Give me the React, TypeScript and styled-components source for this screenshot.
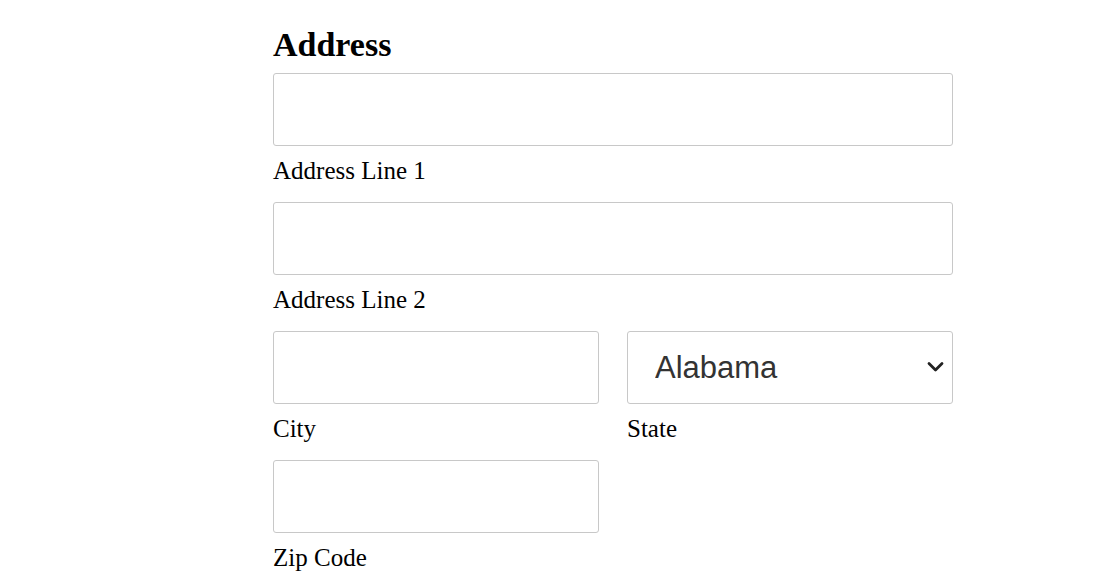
import React from "react";
import styled, { createGlobalStyle } from "styled-components";

const Global = createGlobalStyle`
  html, body { margin: 0; padding: 0; background: #fff; }
  body { font-family: "Liberation Serif", "DejaVu Serif", serif; color: #000; }
`;

const Page = styled.div`
  width: 1116px;
  height: 585px;
  box-sizing: border-box;
  padding: 25px 0 0 273px;
  overflow: hidden;
`;

const Form = styled.form`
  width: 680px;
  display: flex;
  flex-direction: column;
`;

const Heading = styled.h2`
  margin: 0 0 8px 0;
  font-size: 34px;
  line-height: 40px;
  font-weight: 700;
`;

const Row = styled.div<{ $cols?: number }>`
  display: grid;
  grid-template-columns: ${(p) => (p.$cols === 2 ? "326px 326px" : "1fr")};
  column-gap: 28px;
`;

const Field = styled.div`
  display: flex;
  flex-direction: column;
  margin-bottom: 17px;
`;

const TextInput = styled.input`
  box-sizing: border-box;
  height: 73px;
  width: 100%;
  border: 1px solid #c8c8c8;
  border-radius: 3px;
  background: #fff;
  margin: 0;
  padding: 0 14px;
  font-size: 24px;
  outline: none;
`;

const SelectWrap = styled.div`
  position: relative;
  height: 73px;
`;

const Select = styled.select`
  box-sizing: border-box;
  appearance: none;
  -webkit-appearance: none;
  height: 73px;
  width: 100%;
  border: 1px solid #c8c8c8;
  border-radius: 3px;
  background: #fff;
  margin: 0;
  padding: 0 40px 0 27px;
  font-family: "Liberation Sans", Arial, sans-serif;
  font-size: 31px;
  color: #333;
  outline: none;
`;

const Chevron = styled.svg`
  position: absolute;
  right: 9px;
  top: 30px;
  width: 17px;
  height: 12px;
  pointer-events: none;
`;

const Label = styled.label`
  margin-top: 11px;
  font-size: 25px;
  line-height: 28px;
`;

export default function App() {
  return (
    <>
      <Global />
      <Page>
        <Form onSubmit={(e) => e.preventDefault()}>
          <Heading>Address</Heading>
          <Row>
            <Field>
              <TextInput id="a1" type="text" />
              <Label htmlFor="a1">Address Line 1</Label>
            </Field>
          </Row>
          <Row>
            <Field>
              <TextInput id="a2" type="text" />
              <Label htmlFor="a2">Address Line 2</Label>
            </Field>
          </Row>
          <Row $cols={2}>
            <Field>
              <TextInput id="city" type="text" />
              <Label htmlFor="city">City</Label>
            </Field>
            <Field>
              <SelectWrap>
                <Select id="state" defaultValue="AL">
                  <option value="AL">Alabama</option>
                  <option value="AK">Alaska</option>
                  <option value="AZ">Arizona</option>
                </Select>
                <Chevron viewBox="0 0 17 12">
                  <path d="M2 2.5 L8.5 9 L15 2.5" fill="none" stroke="#222" strokeWidth="2.8" strokeLinecap="round" strokeLinejoin="round" />
                </Chevron>
              </SelectWrap>
              <Label htmlFor="state">State</Label>
            </Field>
          </Row>
          <Row $cols={2}>
            <Field>
              <TextInput id="zip" type="text" />
              <Label htmlFor="zip">Zip Code</Label>
            </Field>
          </Row>
        </Form>
      </Page>
    </>
  );
}
